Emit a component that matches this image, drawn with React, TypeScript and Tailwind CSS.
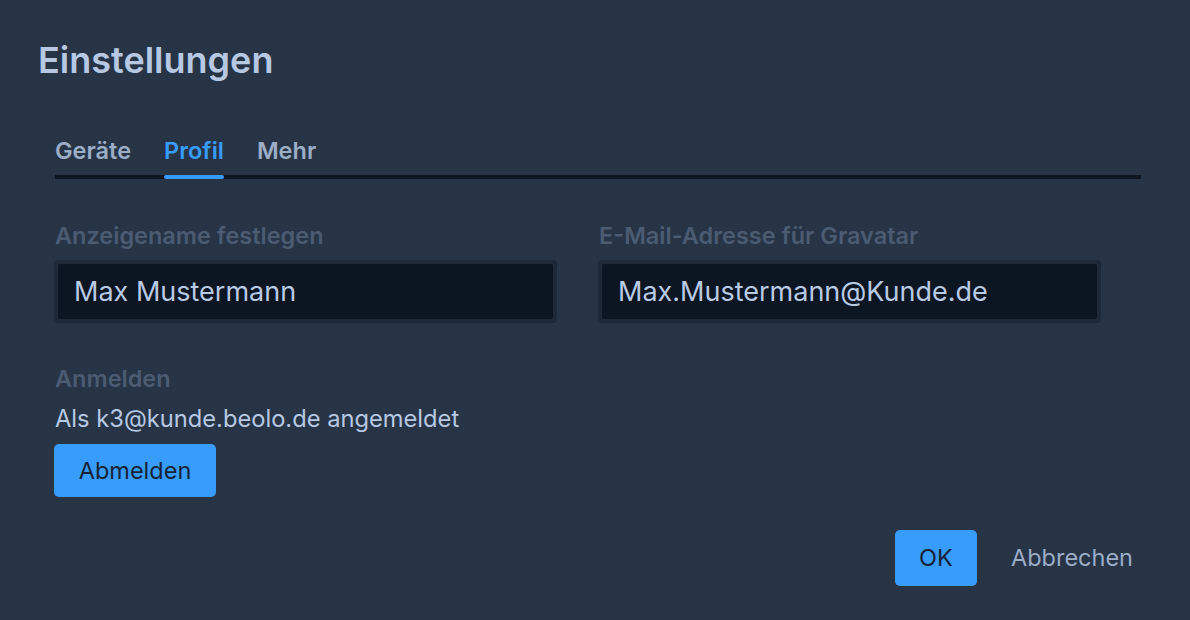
import { useState } from "react";

const tabs = ["Geräte", "Profil", "Mehr"];

function App(): JSX.Element {
  const [tab, setTab] = useState("Profil");

  return (
    <div
      className="w-[1190px] h-[620px] bg-[#263446] overflow-hidden"
      style={{ fontFamily: "Inter, 'Noto Sans', sans-serif" }}
    >
      <div className="pl-[38px] pt-[38px]">
        <h1 className="text-[36px] leading-[44px] font-semibold text-[#b7c8e2]">
          Einstellungen
        </h1>
      </div>

      <div className="pl-[55px] pr-[49px] pt-[55px]">
        {/* tabs */}
        <div className="relative flex gap-[33px] border-b-4 border-[#0d1520]">
          {tabs.map((t) => (
            <button
              key={t}
              onClick={() => setTab(t)}
              className={
                "relative pb-[10px] text-[23.5px] leading-[28px] font-semibold " +
                (tab === t ? "text-[#379cfb]" : "text-[#9cadc6]")
              }
            >
              {t}
              {tab === t && (
                <span className="absolute left-0 right-0 -bottom-[4px] h-[4px] rounded-full bg-[#379cfb]" />
              )}
            </button>
          ))}
        </div>

        {/* fields */}
        <div className="grid grid-cols-2 gap-x-[41px] pr-[40px] pt-[42px] -ml-px">
          <div className="flex flex-col">
            <label className="pl-px text-[23.5px] leading-[30px] font-semibold text-[#4b5b71]">
              Anzeigename festlegen
            </label>
            <div className="mt-[9px] rounded-[4px] bg-[#1d2838] p-[4px]">
              <input
                defaultValue="Max Mustermann"
                className="w-full h-[55px] bg-[#0c1522] px-[16px] text-[27px] text-[#b9cae4] outline-none rounded-[2px]"
              />
            </div>
          </div>
          <div className="flex flex-col">
            <label className="pl-px text-[23.5px] leading-[30px] font-semibold text-[#4b5b71]">
              E-Mail-Adresse für Gravatar
            </label>
            <div className="mt-[9px] rounded-[4px] bg-[#1d2838] p-[4px]">
              <input
                defaultValue="Max.Mustermann@Kunde.de"
                className="w-full h-[55px] bg-[#0c1522] px-[16px] text-[27px] text-[#b9cae4] outline-none rounded-[2px]"
              />
            </div>
          </div>
        </div>

        {/* anmelden */}
        <div className="pt-[41px]">
          <div className="text-[23.5px] leading-[30px] font-semibold text-[#4b5b71]">
            Anmelden
          </div>
          <div className="mt-[10px] text-[23.7px] leading-[30px] text-[#b7c8e2]">
            Als k3@kunde.beolo.de angemeldet
          </div>
          <button className="-ml-px mt-[10px] w-[162px] h-[53px] rounded-[5px] bg-[#389cfb] text-[23.5px] text-[#172335]">
            Abmelden
          </button>
        </div>

        {/* footer */}
        <div className="flex justify-end items-center gap-[34px] pr-[8px] mt-[33px]">
          <button className="w-[82px] h-[56px] rounded-[5px] bg-[#389cfb] text-[23.5px] text-[#172335]">
            OK
          </button>
          <button className="text-[23.5px] text-[#9cadc6]">Abbrechen</button>
        </div>
      </div>
    </div>
  );
}

export default App;
